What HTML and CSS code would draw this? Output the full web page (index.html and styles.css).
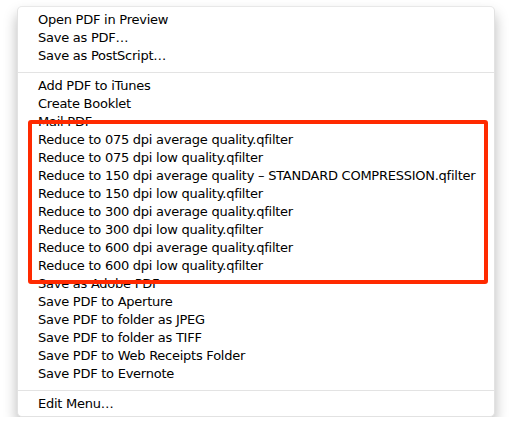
FILE: index.html
```html
<!DOCTYPE html>
<html lang="en">
<head>
  <meta charset="UTF-8" />
  <title>PDF Menu</title>
  <link rel="stylesheet" href="styles.css">
</head>
<body>

  <!-- PDF popup menu from the print dialog -->
  <div class="menu">
    <div class="item">Open PDF in Preview</div>
    <div class="item">Save as PDF…</div>
    <div class="item">Save as PostScript…</div>
    <div class="sep"></div>
    <div class="item">Add PDF to iTunes</div>
    <div class="item">Create Booklet</div>
    <div class="item">Mail PDF</div>
    <div class="item">Reduce to 075 dpi average quality.qfilter</div>
    <div class="item">Reduce to 075 dpi low quality.qfilter</div>
    <div class="item">Reduce to 150 dpi average quality – STANDARD COMPRESSION.qfilter</div>
    <div class="item">Reduce to 150 dpi low quality.qfilter</div>
    <div class="item">Reduce to 300 dpi average quality.qfilter</div>
    <div class="item">Reduce to 300 dpi low quality.qfilter</div>
    <div class="item">Reduce to 600 dpi average quality.qfilter</div>
    <div class="item">Reduce to 600 dpi low quality.qfilter</div>
    <div class="item">Save as Adobe PDF</div>
    <div class="item">Save PDF to Aperture</div>
    <div class="item">Save PDF to folder as JPEG</div>
    <div class="item">Save PDF to folder as TIFF</div>
    <div class="item">Save PDF to Web Receipts Folder</div>
    <div class="item">Save PDF to Evernote</div>
    <div class="sep"></div>
    <div class="item">Edit Menu…</div>

    <!-- red highlight around the qfilter entries -->
    <div class="highlight"></div>
  </div>

</body>
</html>
```

FILE: styles.css
```css
body {
  margin: 0;
  padding: 0;
  background: #ffffff;
  color: #000000;
  font-family: 'DejaVu Sans', sans-serif;
}

.menu {
  position: relative;
  display: flex;
  flex-direction: column;
  width: 478px;
  margin: 6px 0 0 17px;
  padding: 4px 0 3px;
  background: #ffffff;
  border: 1px solid #e2e2e2;
  border-top-color: #e8e8e8;
  border-radius: 5px;
  box-sizing: border-box;
  box-shadow: 0 8px 14px rgba(0, 0, 0, 0.28);
}

.item {
  height: 18px;
  line-height: 18px;
  padding-left: 20px;
  font-size: 13px;
  letter-spacing: -0.25px;
  white-space: nowrap;
}

.sep {
  height: 1px;
  margin: 7px 0 4px;
  background: #e3e3e3;
}

/* 🔴 highlight box */
.highlight {
  position: absolute;
  left: 10px;
  top: 113px;
  width: 460px;
  height: 164px;
  border: 4px solid #ff2a00;
  border-radius: 3px;
  box-sizing: border-box;
}
```
